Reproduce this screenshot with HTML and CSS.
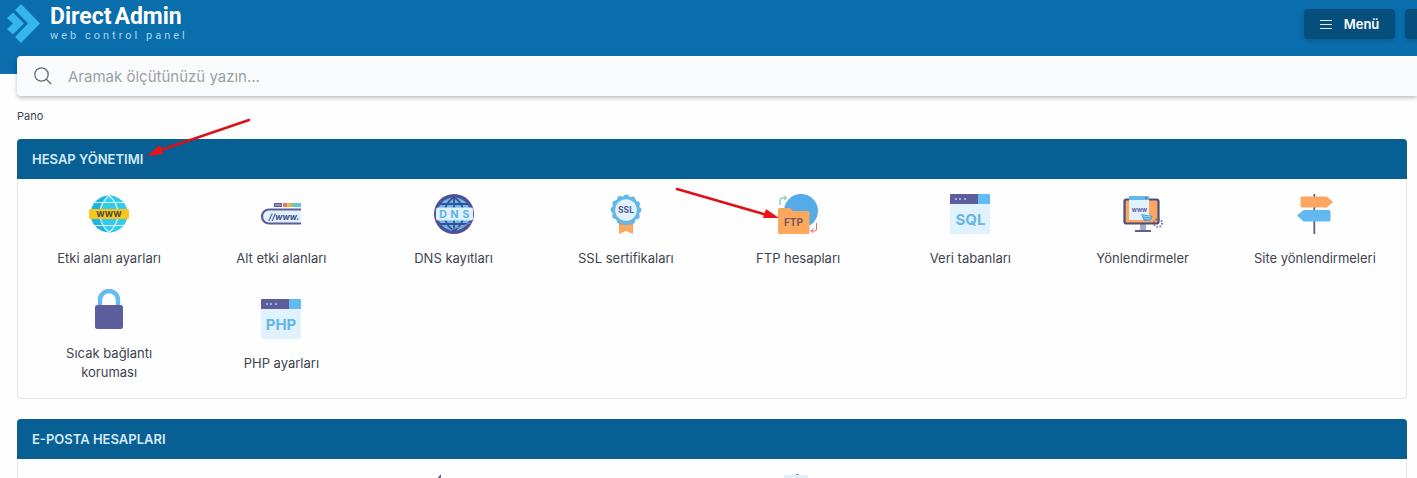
FILE: index.html
```html
<!DOCTYPE html>
<html lang="tr">
<head>
  <meta charset="UTF-8" />
  <meta name="viewport" content="width=device-width, initial-scale=1.0"/>
  <title>DirectAdmin</title>
  <link rel="stylesheet" href="styles.css">
</head>
<body>
  <header class="header">
    <a class="logo" href="#">
      <svg class="logo-mark" viewBox="0 0 34 40" aria-hidden="true">
        <path d="M8 6 14 0 33 19.500 14 39 8 33 21 19.500Z" fill="#35b5ea"/>
        <path d="M0 14 6 8.500 17 19.500 6 30.500 0 25 6 19.500Z" fill="#35b5ea"/>
      </svg>
      <span class="logo-text">
        <span class="logo-name"><span>Direct</span><span>Admin</span></span>
        <span class="logo-tagline">web control panel</span>
      </span>
    </a>
    <nav class="header-nav">
      <button class="nav-button" type="button">
        <svg width="12" height="12" viewBox="0 0 12 12" aria-hidden="true"><path d="M0 2.500h12M0 6.500h12M0 10.500h12" stroke="#dcebf5"/></svg>
        Menü
      </button>
      <button class="nav-button nav-button-user" type="button" aria-label="Kullanıcı"></button>
    </nav>
  </header>

  <form class="search">
    <svg width="18" height="18" viewBox="0 0 18 18" fill="none" stroke="#656b73" stroke-width="1.300" aria-hidden="true">
      <circle cx="7.500" cy="7.500" r="6.700"/><path d="m12.300 12.300 4.900 4.700"/>
    </svg>
    <input type="text" placeholder="Aramak ölçütünüzü yazın..." aria-label="Arama">
  </form>

  <main class="content">
    <a class="breadcrumb" href="#">Pano</a>

    <section class="panel">
      <h2>HESAP YÖNETIMI</h2>
      <div class="grid">
        <a class="item" href="#">
          <svg class="icon" viewBox="0 0 40 40" aria-hidden="true">
            <circle cx="20" cy="20" r="18.500" fill="#1fb5df"/>
            <path d="M20 1.500a18.500 18.500 0 0 1 0 37c-13-10-13-27 0-37" fill="#35cbed"/>
            <g fill="none" stroke="#d9f7fd" stroke-width="1.200">
              <path d="M20 1.500C8 12 8 28 20 38.500M20 1.500C32 12 32 28 20 38.500M5.500 8.500h29M5.500 31.500h29"/>
            </g>
            <rect y="15" width="40" height="10" rx="1.500" fill="#f8c51c"/>
            <text class="icon-text" x="20" y="23" font-size="8" fill="#4b453a">WWW</text>
          </svg>
          <span>Etki alanı ayarları</span>
        </a>
        <a class="item" href="#">
          <svg class="icon" viewBox="0 0 40 40" aria-hidden="true">
            <path d="M13 9h8v4h-8z" fill="#62599d"/><path d="M14 11h6" stroke="#c6c4df"/>
            <path d="M22 9h4v4h-4z" fill="#ed765f"/><path d="M26 9h4v4h-4z" fill="#f7b34e"/>
            <path d="M30 9h5v4h-5z" fill="#73c99b"/><path d="M35 9h5v4h-5z" fill="#63bdf0"/>
            <path d="M40 15.500H8a7 7 0 0 0 0 14h32" fill="#dff1fd" stroke="#5c5d9b" stroke-width="2.200"/>
            <text class="icon-text" x="23" y="25.500" font-size="8.500" font-style="italic" fill="#484c88">//www.</text>
          </svg>
          <span>Alt etki alanları</span>
        </a>
        <a class="item" href="#">
          <svg class="icon" viewBox="0 0 40 40" aria-hidden="true">
            <circle cx="20" cy="20" r="20" fill="#4c5198"/>
            <circle cx="20" cy="20" r="16.500" fill="#63bbee"/>
            <g fill="none" stroke="#424c91" stroke-width="1.800">
              <path d="M20 3v34M20 3C7 12 7 28 20 37M20 3c13 9 13 25 0 34M6 10h28M6 30h28"/>
            </g>
            <path d="M16 37c5-3 8-4 12-4 4-3 5-3 9-4" fill="none" stroke="#8d91c1" stroke-width="1"/>
            <rect x="2" y="13.500" width="37" height="13" rx="2" fill="#dff1fd"/>
            <g class="icon-text" font-size="10.500" fill="#5ab2e9">
              <text x="9" y="24">D</text><text x="20.500" y="24">N</text><text x="32" y="24">S</text>
            </g>
          </svg>
          <span>DNS kayıtları</span>
        </a>
        <a class="item" href="#">
          <svg class="icon" viewBox="0 0 40 40" aria-hidden="true">
            <path d="M13 26h14v14l-7-3-7 3z" fill="#f9aa62"/>
            <path d="M13 29h14v2H13z" fill="#e49355"/>
            <circle cx="20" cy="16" r="13.800" fill="#63b7e9"/>
            <circle cx="20" cy="16" r="12.500" fill="none" stroke="#63b7e9" stroke-width="5.800" stroke-linecap="round" stroke-dasharray="0 6.545"/>
            <circle cx="20" cy="16" r="10.800" fill="#e2f2fd"/>
            <text class="icon-text" x="20" y="19" font-size="8.500" fill="#555a96">SSL</text>
          </svg>
          <span>SSL sertifikaları</span>
        </a>
        <a class="item" href="#">
          <svg class="icon" viewBox="0 0 40 40" aria-hidden="true">
            <circle cx="23" cy="17" r="17" fill="#55aae9"/>
            <path d="M0 15.500q0-1.500 1.500-1.500H12l3 3h15q1.500 0 1.500 1.500v20q0 1.500-1.500 1.500H1.500Q0 40 0 38.500z" fill="#fca85c"/>
            <text class="icon-text" x="15.500" y="32" font-size="10" fill="#77565e">FTP</text>
            <path d="M2 11V6q0-2 2-2h4M6 1.500 8.500 4 6 6.500" fill="none" stroke="#5fb78c"/>
            <path d="M38.500 29v6q0 2-2 2H33m2.500-2.500L33 37l2.500 2" fill="none" stroke="#e76868"/>
          </svg>
          <span>FTP hesapları</span>
        </a>
        <a class="item" href="#">
          <svg class="icon" viewBox="0 0 40 40" aria-hidden="true">
            <rect width="40" height="40" rx="1.500" fill="#e0f2fe"/>
            <path d="M1 0h27v10H0V1q0-1 1-1z" fill="#5d5d9d"/><path d="M28 0h11q1 0 1 1v9H28z" fill="#62bbf2"/>
            <path d="M5 5h2m2 0h2m3 0h2" stroke="#9ed3f5" stroke-width="1.500"/>
            <text class="icon-text" x="20.500" y="30.500" font-size="15" fill="#65b5e9">SQL</text>
          </svg>
          <span>Veri tabanları</span>
        </a>
        <a class="item" href="#">
          <svg class="icon" viewBox="0 0 40 40" aria-hidden="true">
            <path d="M17 30h6v7h-6z" fill="#a3abc8"/><path d="M12 37h16" stroke="#5e6287" stroke-width="2"/>
            <rect x="1.500" y="5.500" width="34" height="24" rx="2" fill="#fba55d" stroke="#4c4c7d" stroke-width="2.200"/>
            <path d="M6 2h20v24H6z" fill="#e1f2fd"/><path d="M6 2h20v4H6z" fill="#61b9ee"/>
            <path d="m22 3 2 2m0-2-2 2" stroke="#a2677d"/>
            <text class="icon-text" x="16.500" y="18" font-size="6" fill="#5e629c">www</text>
            <path d="m18 20 12 2-3 5h-6z" fill="#4ba7df"/><path d="m20 22 8 1m-7 1 6 1" stroke="#9ed6f3"/>
            <circle cx="35" cy="29" r="4" fill="none" stroke="#5d6189" stroke-width="1.600" stroke-dasharray="1.500 1.600"/>
          </svg>
          <span>Yönlendirmeler</span>
        </a>
        <a class="item" href="#">
          <svg class="icon" viewBox="0 0 40 40" aria-hidden="true">
            <path d="M19.300 0v40" stroke="#625b78" stroke-width="1.800"/>
            <path d="M7 2.500h24q1 0 1.500.500L38 8l-5.500 5q-.500.500-1.500.500H7q-1.500 0-1.500-1.500V4q0-1.500 1.500-1.500z" fill="#fba761"/>
            <path d="M34 16H9.500q-1 0-1.500.500L2 21.500 8 27q.500.500 1.500.500H34q1.500 0 1.500-1.500v-8.500Q35.500 16 34 16z" fill="#62b9f0"/>
          </svg>
          <span>Site yönlendirmeleri</span>
        </a>
        <a class="item" href="#">
          <svg class="icon" viewBox="0 0 40 40" aria-hidden="true">
            <path d="M11 19v-8a9 9 0 0 1 18 0v8" fill="none" stroke="#66baf0" stroke-width="4.400"/>
            <rect x="6" y="16" width="28" height="24" rx="2.500" fill="#5b5d9c"/>
          </svg>
          <span>Sıcak bağlantı koruması</span>
        </a>
        <a class="item" href="#">
          <svg class="icon" viewBox="0 0 40 40" aria-hidden="true">
            <rect width="40" height="40" rx="1.500" fill="#e0f2fe"/>
            <path d="M1 0h27v10H0V1q0-1 1-1z" fill="#5d5d9d"/><path d="M28 0h11q1 0 1 1v9H28z" fill="#62bbf2"/>
            <path d="M5 5h2m2 0h2m3 0h2" stroke="#9ed3f5" stroke-width="1.500"/>
            <text class="icon-text" x="20" y="30.500" font-size="15" fill="#65b5e9">PHP</text>
          </svg>
          <span>PHP ayarları</span>
        </a>
      </div>
    </section>

    <section class="panel">
      <h2>E-POSTA HESAPLARI</h2>
      <div class="grid">
        <div class="item item-forward">
          <svg class="icon" viewBox="0 0 40 40" aria-hidden="true">
            <path d="M7 0v3L3 8 2 6z" fill="#5d5690"/>
          </svg>
        </div>
        <div class="item item-list">
          <svg class="icon" viewBox="0 0 40 40" aria-hidden="true">
            <path d="M6 1h24v39H6z" fill="#e0f0fa"/><path d="M18 0h3v1h-3z" fill="#7799b4"/>
          </svg>
        </div>
      </div>
    </section>
  </main>

  <!-- Pointer arrows -->
  <svg class="arrow arrow-title" width="106" height="44" viewBox="0 0 106 44" aria-hidden="true">
    <path d="M103 3 12 34" stroke="#dc1218" stroke-width="2.600" stroke-linecap="round"/>
    <path d="m1 39 13-11 3 9z" fill="#ee1116"/>
  </svg>
  <svg class="arrow arrow-ftp" width="106" height="36" viewBox="0 0 106 36" aria-hidden="true">
    <path d="m3 3 90 26" stroke="#dc1218" stroke-width="2.600" stroke-linecap="round"/>
    <path d="M105 32 89 32l3-9z" fill="#ee1116"/>
  </svg>
</body>
</html>
```
FILE: styles.css
```css
* {
  box-sizing: border-box;
}
body {
  margin: 0;
  background-color: #fefefe;
  color: #40444f;
  font-family: Inter, "Noto Sans", sans-serif;
  font-size: 13px;
  overflow-x: hidden;
}
a {
  color: inherit;
  text-decoration: none;
}
.header {
  display: flex;
  justify-content: space-between;
  align-items: flex-start;
  height: 74px;
  padding-left: 7px;
  background-color: #0a6dac;
  overflow: hidden;
}
.logo {
  display: flex;
  gap: 9px;
  padding-top: 4px;
}
.logo-mark {
  width: 34px;
  height: 40px;
}
.logo-text {
  display: flex;
  flex-direction: column;
  color: white;
  font-family: Roboto, sans-serif;
}
.logo-name {
  display: flex;
  gap: 3px;
  font-size: 23px;
  font-weight: 700;
  line-height: 25px;
}
.logo-tagline {
  font-size: 11px;
  line-height: 13px;
  letter-spacing: 3px;
  color: #a9d6f1;
}
.header-nav {
  display: flex;
  gap: 10px;
  padding-top: 9px;
  margin-right: -78px;
}
.nav-button {
  display: flex;
  align-items: center;
  justify-content: center;
  gap: 12px;
  width: 91px;
  height: 30px;
  border: none;
  border-radius: 4px;
  background-color: #064f7d;
  box-shadow: 0 2px 4px rgba(0, 0, 0, 0.15);
  color: white;
  font-family: inherit;
  font-size: 13px;
  font-weight: 600;
  cursor: pointer;
}
.nav-button-user {
  width: 90px;
}
.search {
  display: flex;
  align-items: center;
  gap: 16px;
  height: 40px;
  margin: -18px 0 0 17px;
  padding-left: 17px;
  position: relative;
  background-color: #fafbfd;
  border-radius: 4px 0 0 4px;
  box-shadow: 0 2px 4px rgba(0, 0, 0, 0.25);
}
.search input {
  flex: 1;
  border: none;
  outline: none;
  padding: 0;
  background: transparent;
  font-family: inherit;
  font-size: 15px;
}
.search input::placeholder {
  color: #9b9fa6;
}
.content {
  padding: 12px 10px 0 17px;
}
.breadcrumb {
  display: block;
  margin-bottom: 15px;
  font-size: 11px;
  line-height: 16px;
}
.panel {
  margin-bottom: 20px;
  border: 1px solid #e3e5e8;
  border-top: none;
  border-radius: 4px;
}
.panel h2 {
  margin: 0 -1px;
  padding: 0 15px;
  border-radius: 4px 4px 0 0;
  background-color: #075f94;
  color: #d5eaf8;
  font-size: 13px;
  font-weight: 600;
  line-height: 40px;
}
.grid {
  display: grid;
  grid-template-columns: repeat(8, 1fr);
  row-gap: 1px;
  padding: 5px 5px 6px;
}
.item {
  display: flex;
  flex-direction: column;
  align-items: center;
  justify-content: center;
  gap: 15px;
  padding: 10px 16px;
  line-height: 19px;
  text-align: center;
}
.item-forward {
  grid-column: 3;
}
.item-list {
  grid-column: 5;
}
.icon {
  width: 40px;
  height: 40px;
}
.icon-text {
  font-family: Inter, sans-serif;
  font-weight: 700;
  text-anchor: middle;
}
.arrow {
  position: absolute;
  fill: none;
}
.arrow-title {
  left: 146px;
  top: 117px;
}
.arrow-ftp {
  left: 674px;
  top: 186px;
}
```
